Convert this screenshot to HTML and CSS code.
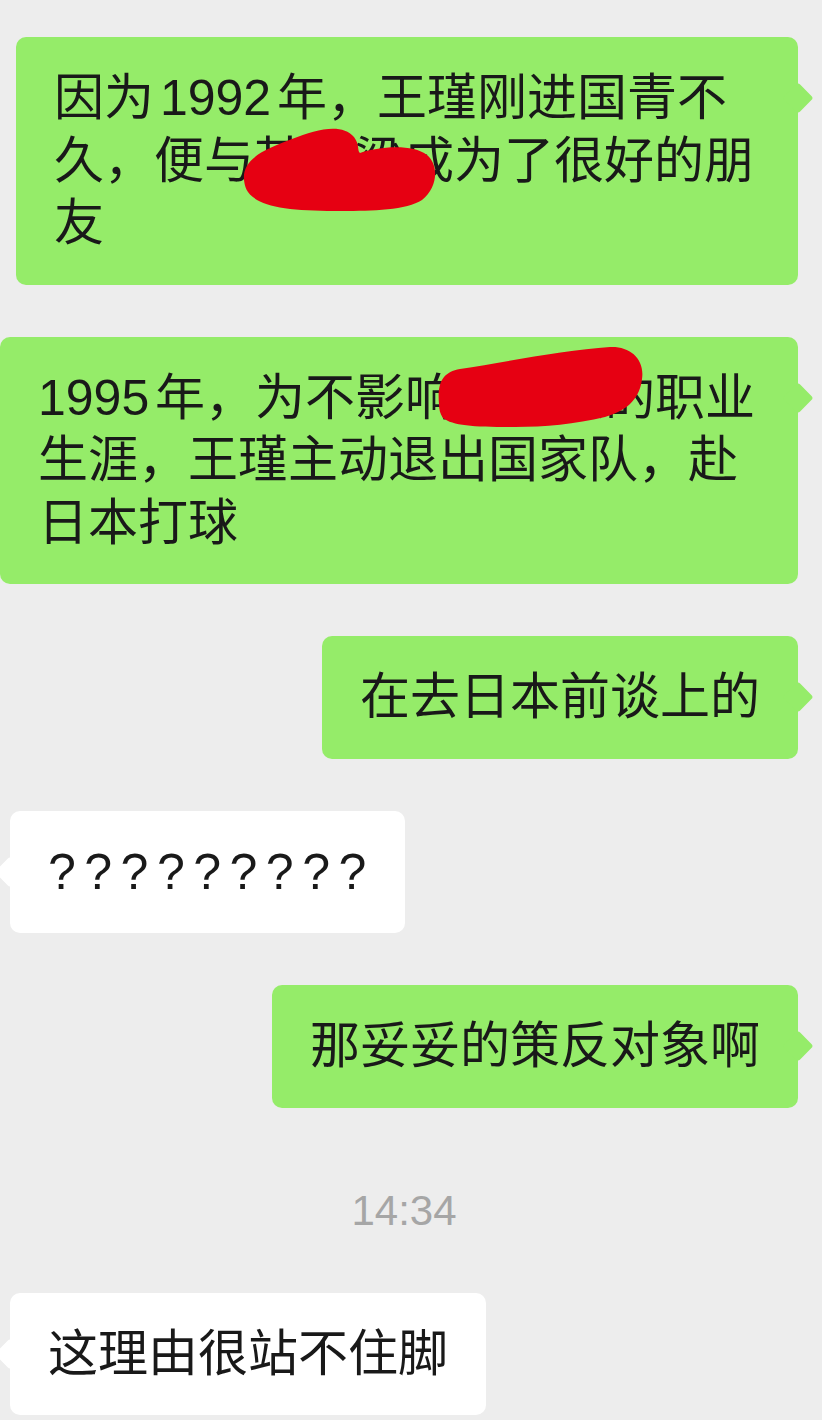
FILE: index.html
```html
<!DOCTYPE html>
<html>
<head>
  <meta charset="utf-8">
  <link rel="stylesheet" href="styles.css">
</head>
<body>
	<div class="chat">
		<div class="row sent">
			<div class="bubble green">
				因为 1992 年，王瑾刚进国青不久，便与某某梁成为了很好的朋友
				<!-- mancha roja que tapa el nombre -->
				<svg class="blot blot-1" width="200" height="90" viewBox="0 0 200 90">
					<path d="M2,55 C0,35 20,25 50,14 C75,4 100,-2 112,12 C118,20 115,26 118,28 C135,22 170,18 185,30 C197,40 196,62 180,75 C165,85 130,86 100,86 C60,86 30,84 15,75 C4,68 3,62 2,55 Z"/>
				</svg>
			</div>
		</div>
		<div class="row sent">
			<div class="bubble green wide">
				1995 年，为不影响某某某的职业生涯，王瑾主动退出国家队，赴日本打球
				<svg class="blot blot-2" width="212" height="86" viewBox="0 0 212 86">
					<path d="M4,60 C2,38 8,28 25,25 C70,18 130,6 175,3 C195,2 210,15 207,35 C205,52 195,66 170,73 C140,80 110,83 80,83 C40,83 18,82 8,74 C5,70 4,65 4,60 Z"/>
				</svg>
			</div>
		</div>
		<div class="row sent">
			<div class="bubble green">在去日本前谈上的</div>
		</div>
		<div class="row recv">
			<div class="bubble white qq">?????????</div>
		</div>
		<div class="row sent">
			<div class="bubble green">那妥妥的策反对象啊</div>
		</div>
		<div class="time">14:34</div>
		<div class="row recv">
			<div class="bubble white">这理由很站不住脚</div>
		</div>
	</div>
</body>
</html>
```

FILE: styles.css
```css
/* ============================================================
  BASE
============================================================ */
html, body {
  margin: 0;
  padding: 0;
  background-color: #ededed;
}
body {
  width: 822px;
  height: 1420px;
  overflow: hidden;
  font-family: "Liberation Sans", "Noto Sans CJK SC", sans-serif;
  color: #191919;
}

.chat {
  display: flex;
  flex-direction: column;
  gap: 52px;
  padding-top: 37px;
}

/* ============================================================
  ROWS
============================================================ */
.row {
  display: flex;
}
.row.sent {
  justify-content: flex-end;
  padding-right: 24px;
}
.row.recv {
  justify-content: flex-start;
  padding-left: 10px;
}

/* ============================================================
  BUBBLES
============================================================ */
.bubble {
  position: relative;
  box-sizing: border-box;
  max-width: 782px;
  padding: 30px 38px;
  font-size: 50px;
  line-height: 62.5px;
  word-spacing: -8px;
  border-radius: 10px;
}
.bubble.green {
  background-color: #95ec69;
}
.bubble.white {
  background-color: #ffffff;
}
.bubble.wide {
  max-width: 798px;
  padding-right: 30px;
}
.bubble.qq {
  letter-spacing: 8.5px;
  padding-right: 30px;
}

/* colita de la burbuja */
.bubble:after {
  content: "";
  position: absolute;
  top: 50px;
  width: 22px;
  height: 22px;
  border-radius: 3px;
  transform: rotate(45deg);
}
.bubble.green:after {
  right: -11px;
  background-color: #95ec69;
}
.bubble.white:after {
  left: -11px;
  background-color: #ffffff;
}

/* ============================================================
  MANCHAS ROJAS
============================================================ */
.blot {
  position: absolute;
}
.blot path {
  fill: #e60012;
}
.blot-1 {
  left: 226px;
  top: 88px;
}
.blot-2 {
  left: 435px;
  top: 7px;
}

/* ============================================================
  HORA
============================================================ */
.time {
  margin: 26px 0 5px;
  padding-right: 14px;
  text-align: center;
  font-size: 42px;
  line-height: 50px;
  color: #a6a6a6;
}
```
